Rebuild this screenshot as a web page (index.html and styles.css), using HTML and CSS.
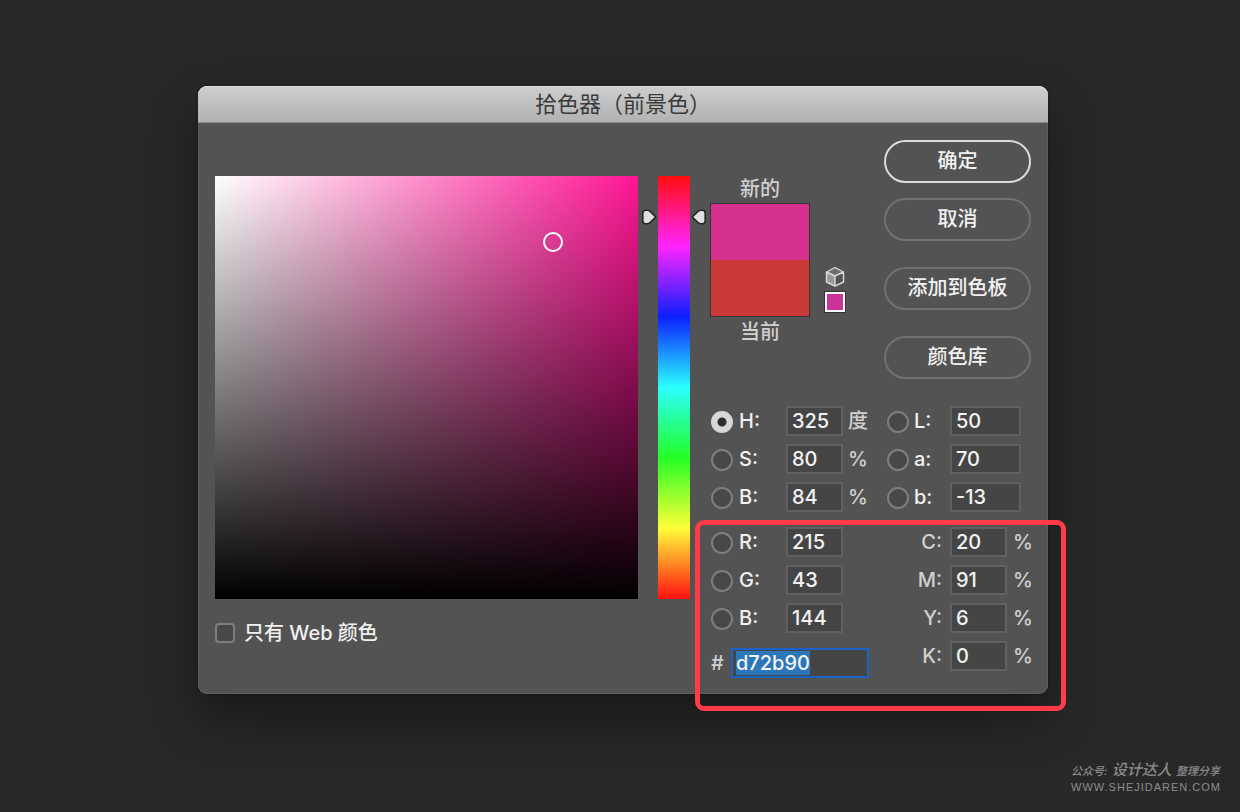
FILE: index.html
```html
<!DOCTYPE html>
<html lang="zh-CN">
<head>
<meta charset="utf-8">
<meta name="viewport" content="width=device-width, initial-scale=1">
<title>拾色器（前景色）</title>
<link rel="stylesheet" href="styles.css">
</head>
<body>
<main class="stage">
  <section class="dialog" role="dialog" aria-labelledby="dialog-title">
    <h1 class="titlebar" id="dialog-title">拾色器（前景色）</h1>
    <form class="content">
      <div class="field-column">
        <div class="field"><span class="field-marker"></span></div>
        <label class="web-only"><input class="check" type="checkbox">只有 Web 颜色</label>
      </div>

      <div class="hue">
        <div class="hue-strip"></div>
        <svg class="hue-arrow hue-arrow-left" viewBox="0 0 15 16" aria-hidden="true"><path d="M3.8 1.2H5.4Q6.8 1.2 7.8 2.2L13.2 7.3Q13.8 8 13.2 8.7L7.8 13.8Q6.8 14.8 5.4 14.8H3.8Q.8 14.8 .8 11.8V4.2Q.8 1.2 3.8 1.2Z"/></svg>
        <svg class="hue-arrow hue-arrow-right" viewBox="0 0 15 16" aria-hidden="true"><path d="M11.2 1.2H9.6Q8.2 1.2 7.2 2.2L1.8 7.3Q1.2 8 1.8 8.7L7.2 13.8Q8.2 14.8 9.6 14.8H11.2Q14.2 14.8 14.2 11.8V4.2Q14.2 1.2 11.2 1.2Z"/></svg>
      </div>

      <div class="controls">
        <div class="top">
          <div class="preview">
            <span class="preview-label">新的</span>
            <div class="swatch"><div class="swatch-new"></div><div class="swatch-current"></div></div>
            <span class="preview-label">当前</span>
          </div>
          <div class="websafe">
            <svg class="cube" viewBox="0 0 20 22" aria-hidden="true">
              <path class="cube-shade" d="M1.5 6L10 10V20.2L1.5 16Z"/>
              <path class="cube-top" d="M10 1.5L18.5 6 10 10 1.5 6Z"/>
              <path class="cube-line" d="M10 1.5L18.5 6V16L10 20.2 1.5 16V6ZM1.5 6L10 10 18.5 6M10 10V20"/>
            </svg>
            <span class="websafe-color"></span>
          </div>
          <div class="actions">
            <div class="actions-main">
              <button class="button button-primary" type="button">确定</button>
              <button class="button" type="button">取消</button>
            </div>
            <button class="button" type="button">添加到色板</button>
            <button class="button" type="button">颜色库</button>
          </div>
        </div>

        <div class="values">
          <div class="rows">
            <div class="row"><input class="radio" type="radio" name="mode" id="m-h" checked><label for="m-h">H:</label><input class="number" type="text" value="325" aria-label="H"><span class="unit">度</span></div>
            <div class="row"><input class="radio" type="radio" name="mode" id="m-s"><label for="m-s">S:</label><input class="number" type="text" value="80" aria-label="S"><span class="unit">%</span></div>
            <div class="row"><input class="radio" type="radio" name="mode" id="m-v"><label for="m-v">B:</label><input class="number" type="text" value="84" aria-label="B"><span class="unit">%</span></div>
          </div>
          <div class="rows">
            <div class="row row-lab"><input class="radio" type="radio" name="mode" id="m-l"><label for="m-l">L:</label><input class="number" type="text" value="50" aria-label="L"></div>
            <div class="row row-lab"><input class="radio" type="radio" name="mode" id="m-a"><label for="m-a">a:</label><input class="number" type="text" value="70" aria-label="a"></div>
            <div class="row row-lab"><input class="radio" type="radio" name="mode" id="m-b"><label for="m-b">b:</label><input class="number" type="text" value="-13" aria-label="b"></div>
          </div>
        </div>

        <div class="values values-marked">
          <div class="rgb">
            <div class="rows">
              <div class="row"><input class="radio" type="radio" name="mode" id="m-r"><label for="m-r">R:</label><input class="number" type="text" value="215" aria-label="R"></div>
              <div class="row"><input class="radio" type="radio" name="mode" id="m-g"><label for="m-g">G:</label><input class="number" type="text" value="43" aria-label="G"></div>
              <div class="row"><input class="radio" type="radio" name="mode" id="m-bl"><label for="m-bl">B:</label><input class="number" type="text" value="144" aria-label="B"></div>
            </div>
            <div class="hex-row"><label class="hash" for="hex">#</label><input class="number hex" type="text" id="hex" value="d72b90"></div>
          </div>
          <div class="rows">
            <div class="row row-cmyk"><label for="c">C:</label><input class="number" type="text" id="c" value="20"><span class="unit">%</span></div>
            <div class="row row-cmyk"><label for="m">M:</label><input class="number" type="text" id="m" value="91"><span class="unit">%</span></div>
            <div class="row row-cmyk"><label for="y">Y:</label><input class="number" type="text" id="y" value="6"><span class="unit">%</span></div>
            <div class="row row-cmyk"><label for="k">K:</label><input class="number" type="text" id="k" value="0"><span class="unit">%</span></div>
          </div>
          <div class="highlight"></div>
        </div>
      </div>
    </form>
  </section>
  <footer class="credit">
    <p class="credit-name"><span>公众号:</span><strong>设计达人</strong><span>整理分享</span></p>
    <p class="credit-url">WWW.SHEJIDAREN.COM</p>
  </footer>
</main>
<script src="app.js"></script>
</body>
</html>
```
FILE: styles.css
```css
* {
  box-sizing: border-box;
}

body {
  margin: 0;
  background: #282828;
  color: #f0f0f0;
  font: 500 20px/24px Inter, "Noto Sans CJK SC", sans-serif;
}

.stage {
  display: flex;
  flex-direction: column;
  justify-content: space-between;
  min-height: 100vh;
  padding: 86px 20px 18px 198px;
}

.dialog {
  margin-right: 172px;
  min-width: 720px;
  border-radius: 9px;
  background: #535353;
  box-shadow: inset 0 0 0 1px #5e5e5e, 0 0 2px #141414, 0 24px 50px rgba(0, 0, 0, 0.4);
}

.titlebar {
  margin: 0;
  height: 37px;
  border-bottom: 1px solid #8c8c8c;
  border-radius: 9px 9px 0 0;
  background: linear-gradient(#cecece, #b2b2b2);
  box-shadow: inset 0 1px #dcdcdc;
  color: #3a3a3a;
  font-size: 22px;
  font-weight: 400;
  line-height: 36px;
  text-align: center;
}

.content {
  display: grid;
  grid-template-columns: 1fr 64px 321px;
  gap: 4px;
  padding: 17px 17px 16px;
}

.field-column,
.hue {
  padding-top: 36px;
}

.field {
  position: relative;
  aspect-ratio: 1;
  background: linear-gradient(to top, #000, transparent), linear-gradient(to right, #fff, #ff1695);
}

.field-marker {
  position: absolute;
  top: 16%;
  left: 80%;
  width: 20px;
  height: 20px;
  margin: -12px -10px;
  border: 2px solid #fff;
  border-radius: 50%;
}

.web-only {
  display: flex;
  align-items: center;
  gap: 9px;
  margin-top: 22px;
}

.check {
  appearance: none;
  width: 20px;
  height: 20px;
  margin: 0;
  border: 2px solid #7e7e7e;
  border-radius: 4px;
  background: #484848;
}

.hue {
  position: relative;
}

.hue-strip {
  width: 32px;
  height: 423px;
  margin: 0 auto;
  background: linear-gradient(#ff0d0d, #ff24ff 16.7%, #0c1fff 33.3%, #2affff 50%, #24ff24 66.7%, #ffff38 83.3%, #ff1010);
}

.hue-arrow {
  position: absolute;
  top: 69px;
  width: 15px;
  height: 16px;
  fill: #e0e0e0;
  stroke: #262626;
  stroke-width: 1.6;
}

.hue-arrow-left {
  left: 0;
}

.hue-arrow-right {
  right: 0;
}

.top {
  display: flex;
  justify-content: space-between;
}

.preview {
  width: 100px;
  padding-top: 36px;
  color: #d0d0d0;
  text-align: center;
}

.preview-label {
  display: block;
  line-height: 27px;
}

.swatch {
  height: 114px;
  margin-bottom: 2px;
  border: 1px solid #333;
}

.swatch-new,
.swatch-current {
  height: 56px;
  background: #d73190;
}

.swatch-current {
  background: #cb3838;
}

.websafe {
  display: flex;
  flex-direction: column;
  align-items: center;
  gap: 4px;
  width: 22px;
  margin-right: 24px;
  padding-top: 126px;
}

.cube {
  width: 20px;
  height: 22px;
}

.cube-shade {
  fill: #999;
}

.cube-top {
  fill: #6e6e6e;
}

.cube-line {
  fill: none;
  stroke: #dadada;
  stroke-width: 1.4;
  stroke-linejoin: round;
}

.websafe-color {
  width: 20px;
  height: 20px;
  border: 2px solid #fff;
  background: #cc3399;
  box-shadow: 0 0 0 1px #333;
}

.actions {
  display: flex;
  flex-direction: column;
  gap: 26px;
  width: 147px;
}

.actions-main {
  display: grid;
  gap: 15px;
}

.button {
  height: 43px;
  padding: 0 0 2px;
  border: 2px solid #727272;
  border-radius: 22px;
  background: none;
  color: #f2f2f2;
  font: inherit;
}

.button-primary {
  border-color: #dcdcdc;
}

.values {
  display: grid;
  grid-template-columns: 176px 1fr;
  margin-top: 27px;
}

.values-marked {
  position: relative;
  margin-top: 15px;
}

.rows {
  display: grid;
  align-content: start;
  gap: 8px;
}

.row {
  display: grid;
  grid-template-columns: 29px 47px 57px 1fr;
  align-items: center;
}

.row-lab {
  grid-template-columns: 28px 36px 71px;
}

.row-cmyk {
  grid-template-columns: 56px 57px 1fr;
  color: #d0d0d0;
}

.row-cmyk label {
  text-align: right;
}

.row-cmyk .number {
  margin-left: 8px;
  margin-right: -8px;
}

.row-cmyk .unit {
  padding-left: 14px;
}

.unit {
  padding-left: 5px;
  color: #d0d0d0;
}

.radio {
  appearance: none;
  width: 22px;
  height: 22px;
  margin: 2px 0 0 1px;
  border: 2px solid #7e7e7e;
  border-radius: 50%;
  background: #484848;
}

.radio:checked {
  border-color: #d6d6d6;
  background: radial-gradient(circle, #2e2e2e 4px, #d6d6d6 5px);
}

.number {
  min-width: 0;
  height: 30px;
  padding: 0 4px;
  border: 2px solid #606060;
  background: #454545;
  color: #f2f2f2;
  font: inherit;
}

.hex-row {
  display: flex;
  align-items: center;
  gap: 6px;
  margin-top: 15px;
  padding-left: 1px;
}

.hash {
  width: 14px;
  color: #d0d0d0;
}

.hex {
  width: 138px;
  padding: 0 3px;
  border-color: #1b62c9;
  outline: none;
}

.hex::selection {
  background: #2d76b8;
  color: #f2f2f2;
}

.highlight {
  position: absolute;
  inset: -7px -35px -33px -15px;
  border: 5px solid #ff3b47;
  border-radius: 9px;
  pointer-events: none;
}

.credit {
  align-self: flex-end;
  width: 149px;
  color: #8c8c8c;
}

.credit p {
  margin: 0;
}

.credit-name {
  display: flex;
  align-items: baseline;
  justify-content: space-between;
  font-size: 11px;
  font-style: italic;
  line-height: 20px;
}

.credit-name strong {
  font-size: 15px;
  font-weight: 500;
}

.credit-url {
  font: 11px/13px "Liberation Sans", sans-serif;
  letter-spacing: 1px;
  white-space: nowrap;
}
```
FILE: app.js
```js
const hex = document.getElementById("hex");
hex.focus({ preventScroll: true });
hex.select();
```
